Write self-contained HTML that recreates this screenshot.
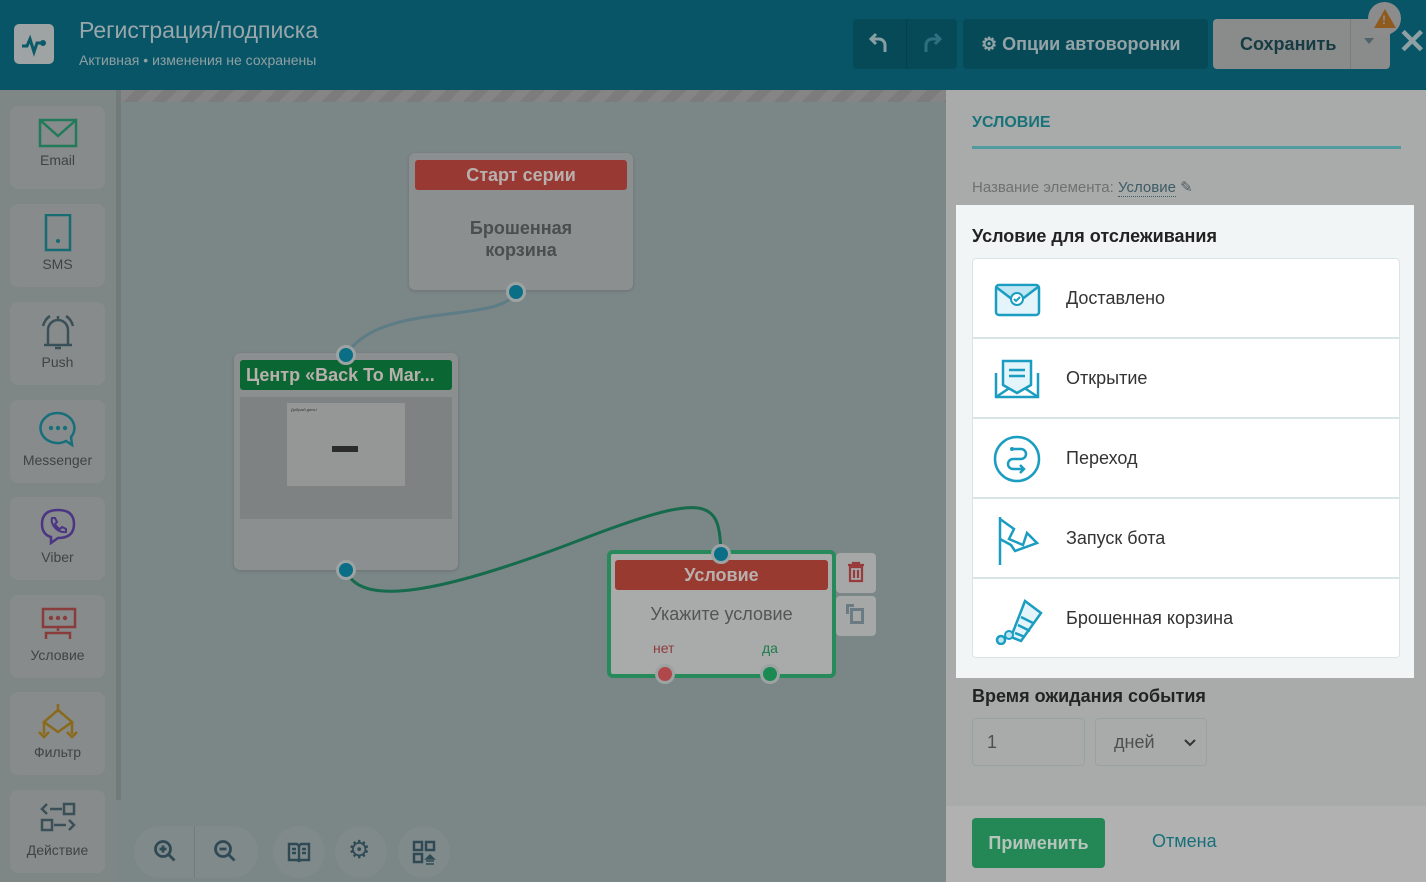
<!DOCTYPE html>
<html><head><meta charset="utf-8"><style>
*{box-sizing:border-box;margin:0;padding:0}
body{width:1426px;height:882px;overflow:hidden;position:relative;font-family:"Liberation Sans","Noto Sans CJK SC",sans-serif;background:#7b8687}
.a{position:absolute}
.hdr{left:0;top:0;width:1426px;height:90px;background:#085567}
.sb{left:0;top:90px;width:116px;height:792px;background:#7f8686}
.sbd{left:116px;top:90px;width:5px;height:710px;background:#737a7a}
.btn{position:absolute;left:10px;width:95px;height:83px;background:#878b8b;border-radius:8px;text-align:center;font-size:14px;color:#3e4444}
.btn svg{display:block;margin:10px auto 4px}
.stripe{left:121px;top:90px;width:825px;height:12px;background:repeating-linear-gradient(135deg,#858585 0 10px,#7c7c7c 10px 20px)}
.node{background:#8c8f8f;border-radius:6px;box-shadow:0 1px 3px rgba(0,0,0,.15)}
.nh{position:absolute;left:6px;right:6px;height:30px;border-radius:3px;color:#b9b0ae;font-weight:bold;font-size:18px;text-align:center;line-height:30px}
.dot{position:absolute;width:20px;height:20px;border-radius:50%;border:3px solid #9da3a3}
.rp{left:946px;top:90px;width:480px;height:716px;background:#a9abaa}
.ft{left:946px;top:806px;width:480px;height:76px;background:#b1b1b1}
.hl{left:956px;top:205px;width:458px;height:473px;background:#f1f5f5}
.card{position:absolute;left:16px;width:428px;height:80px;background:#fff;border:1px solid #d9e5e5;font-size:18px;color:#333;line-height:78px;padding-left:93px}
.card svg{position:absolute;left:20px;top:16px}
.rb{position:absolute;width:52px;height:52px;border-radius:26px;background:#818a8b;top:826px}
.rb svg{position:absolute;left:14px;top:14px}
</style></head><body>
<div class="a hdr">
 <div class="a" style="left:14px;top:24px;width:40px;height:40px;background:#9ea3a3;border-radius:5px"><svg width="40" height="40"><path d="M8 22h5l3-7 4 13 3-9h5" stroke="#0b5a69" stroke-width="3" fill="none"/><circle cx="29" cy="19" r="3" fill="#0b5a69"/></svg></div>
 <div class="a" style="left:79px;top:17px;font-size:23px;color:#9aa7aa">Регистрация/подписка</div>
 <div class="a" style="left:79px;top:52px;font-size:14px;color:#90a0a3">Активная • изменения не сохранены</div>
 <div class="a" style="left:853px;top:19px;width:104px;height:50px;background:#064a58;border-radius:4px"></div>
 <div class="a" style="left:906px;top:19px;width:1px;height:50px;background:#05404c"></div>
 <svg class="a" style="left:868px;top:31px" width="22" height="24"><path d="M8 3L3 8l5 5M3 8h8a6 6 0 0 1 6 6v7" fill="none" stroke="#8a9fa3" stroke-width="3"/></svg>
 <svg class="a" style="left:921px;top:31px" width="22" height="24"><path d="M14 3l5 5-5 5M19 8h-8a6 6 0 0 0-6 6v7" fill="none" stroke="#2f7080" stroke-width="3"/></svg>
 <div class="a" style="left:963px;top:19px;width:245px;height:50px;background:#064a58;border-radius:4px;color:#93a3a6;font-weight:bold;font-size:18px;line-height:50px;padding-left:18px">⚙ Опции автоворонки</div>
 <div class="a" style="left:1213px;top:19px;width:177px;height:50px;background:#8a8b8b;border-radius:4px;color:#163b43;font-weight:bold;font-size:18px;line-height:50px;padding-left:27px">Сохранить</div>
 <div class="a" style="left:1350px;top:19px;width:1px;height:50px;background:#7c7e7e"></div>
 <div class="a" style="left:1364px;top:38px;border:5px solid transparent;border-top:6px solid #4f6468"></div>
 <div class="a" style="left:1368px;top:2px;width:33px;height:33px;border-radius:50%;background:#8c8c8c"></div>
 <div class="a" style="left:1374px;top:9px;border-left:11px solid transparent;border-right:11px solid transparent;border-bottom:19px solid #8e5a1e"></div>
 <div class="a" style="left:1382px;top:13px;font-size:12px;font-weight:bold;color:#8c8c8c">!</div>
 <div class="a" style="left:1398px;top:22px;font-size:34px;color:#8fa0a3;font-weight:bold">✕</div>
</div>
<div class="a sb"></div><div class="a sbd"></div><div class="a stripe"></div>
<div class="btn" style="top:106px"><svg width="40" height="32"><rect x="2" y="4" width="36" height="26" fill="none" stroke="#217a59" stroke-width="2.5"/><path d="M2 4l18 16 18-16" fill="none" stroke="#217a59" stroke-width="2.5"/></svg>Email</div>
<div class="btn" style="top:204px"><svg width="40" height="38"><rect x="8" y="1" width="24" height="35" fill="none" stroke="#176b73" stroke-width="2.5"/><circle cx="20" cy="27" r="2" fill="#176b73"/></svg>SMS</div>
<div class="btn" style="top:302px"><svg width="40" height="38"><path d="M10 33V18a10 10 0 0 1 20 0v15zM6 33h28M17 36h6M20 4v3M5 14q2-7 7-10M35 14q-2-7-7-10" fill="none" stroke="#3a5058" stroke-width="2.5"/></svg>Push</div>
<div class="btn" style="top:400px"><svg width="40" height="38"><path d="M20 3a17 15 0 1 0 8 28l6 4-1-8A17 15 0 0 0 20 3z" fill="none" stroke="#166f7a" stroke-width="2.5"/><circle cx="13" cy="18" r="2.2" fill="#166f7a"/><circle cx="20" cy="18" r="2.2" fill="#166f7a"/><circle cx="27" cy="18" r="2.2" fill="#166f7a"/></svg>Messenger</div>
<div class="btn" style="top:497px"><svg width="40" height="38"><path d="M20 3c10 0 16 4 16 14s-6 14-16 14l-7 5v-6C6 28 4 23 4 17 4 7 10 3 20 3z" fill="none" stroke="#4c3584" stroke-width="2.5"/><path d="M14 11l3 0 2 4-2 2q2 4 5 5l2-2 4 2v3q-8 1-13-7-2-4-1-7z" fill="none" stroke="#4c3584" stroke-width="2"/></svg>Viber</div>
<div class="btn" style="top:595px"><svg width="40" height="38"><rect x="5" y="4" width="32" height="18" fill="none" stroke="#8a3c3c" stroke-width="2.5"/><circle cx="13" cy="13" r="2.2" fill="#8a3c3c"/><circle cx="20" cy="13" r="2.2" fill="#8a3c3c"/><circle cx="27" cy="13" r="2.2" fill="#8a3c3c"/><path d="M20 22v4M8 34v-6h24v6" fill="none" stroke="#8a3c3c" stroke-width="2.5"/></svg>Условие</div>
<div class="btn" style="top:692px"><svg width="50" height="38"><path d="M25 2v6L11 20l14 10 14-10L25 8M11 20v12M39 20v12M6 30l5 5 5-5M34 30l5 5 5-5" fill="none" stroke="#8a6a1a" stroke-width="2.5"/></svg>Фильтр</div>
<div class="btn" style="top:790px"><svg width="40" height="38"><path d="M9 4l-5 5 5 5M12 9h12M16 25h12M31 20l5 5-5 5" fill="none" stroke="#3a5058" stroke-width="2.5"/><rect x="4" y="20" width="10" height="10" fill="none" stroke="#3a5058" stroke-width="2.5"/><rect x="26" y="4" width="10" height="10" fill="none" stroke="#3a5058" stroke-width="2.5"/></svg>Действие</div>

<svg class="a" style="left:120px;top:100px" width="826" height="782"><path d="M396 192C380 225 260 200 226 255" fill="none" stroke="#5d7c85" stroke-width="3"/><path d="M226 470C240 510 330 490 460 440S600 400 601 455" fill="none" stroke="#156b4c" stroke-width="3"/></svg>

<div class="a node" style="left:409px;top:153px;width:224px;height:137px">
 <div class="nh" style="top:7px;background:#983a33">Старт серии</div>
 <div class="a" style="top:64px;width:100%;text-align:center;font-size:18px;font-weight:bold;color:#4a4e4e;line-height:22px">Брошенная<br>корзина</div>
 <div class="dot" style="left:97px;top:129px;background:#0a6e86"></div>
</div>
<div class="a node" style="left:234px;top:353px;width:224px;height:217px">
 <div class="nh" style="top:7px;background:#0a6633;text-align:left;padding-left:6px">Центр «Back To Mar...</div>
 <div class="a" style="left:6px;top:44px;width:212px;height:122px;background:#7f8282"></div>
 <div class="a" style="left:53px;top:50px;width:118px;height:83px;background:#959797;font-size:4px;color:#333;padding:4px">Добрый день!</div>
 <div class="a" style="left:98px;top:93px;width:26px;height:6px;background:#2b2b2b"></div>
 <div class="dot" style="left:102px;top:-8px;background:#0a6e86"></div>
 <div class="dot" style="left:102px;top:207px;background:#0a6e86"></div>
</div>
<div class="a" style="left:607px;top:550px;width:229px;height:128px;background:#a9abab;border:4px solid #268a5a;border-radius:6px">
 <div class="nh" style="top:6px;left:4px;right:4px;background:#983a2f">Условие</div>
 <div class="a" style="top:50px;width:100%;text-align:center;font-size:18px;color:#545555">Укажите условие</div>
 <div class="a" style="left:42px;top:86px;font-size:14px;color:#8d3c3c">нет</div>
 <div class="a" style="left:151px;top:86px;font-size:14px;color:#1d7a4a">да</div>
 <div class="dot" style="left:100px;top:-10px;background:#0a6e86"></div>
 <div class="dot" style="left:44px;top:110px;background:#b0474a"></div>
 <div class="dot" style="left:149px;top:110px;background:#1a8a52"></div>
</div>
<div class="a" style="left:836px;top:553px;width:40px;height:40px;background:#a6a8a8;border-radius:4px"><svg width="40" height="40"><path d="M12 12h16M17 12v-2h6v2M14 14h12v14H14zM18 17v8M22 17v8" fill="none" stroke="#9a3b3b" stroke-width="2.2"/></svg></div>
<div class="a" style="left:836px;top:596px;width:40px;height:40px;background:#a6a8a8;border-radius:4px"><div class="a" style="left:14px;top:12px;width:14px;height:16px;border:3px solid #6a7b84"></div><div class="a" style="left:10px;top:8px;width:8px;height:10px;border-left:3px solid #6a7b84;border-top:3px solid #6a7b84"></div></div>

<div class="rb" style="left:134px;width:124px;background:#818a8b"></div>
<div class="a" style="left:194px;top:826px;width:1px;height:52px;background:#737b7c"></div>
<svg class="a" style="left:152px;top:838px" width="26" height="26"><circle cx="11" cy="11" r="7.5" fill="none" stroke="#2f4a55" stroke-width="2.8"/><path d="M16.5 16.5l6 6M7.5 11h7M11 7.5v7" stroke="#2f4a55" stroke-width="2.8"/></svg>
<svg class="a" style="left:212px;top:838px" width="26" height="26"><circle cx="11" cy="11" r="7.5" fill="none" stroke="#2f4a55" stroke-width="2.8"/><path d="M16.5 16.5l6 6M7.5 11h7" stroke="#2f4a55" stroke-width="2.8"/></svg>
<div class="rb" style="left:273px"><svg width="24" height="24"><path d="M2 4h8l2 2 2-2h8v16h-8l-2 1-2-1H2zM12 6v15M5 9h4M5 13h4M15 9h4M15 13h4" fill="none" stroke="#2f4a55" stroke-width="2.4"/></svg></div>
<div class="rb" style="left:335px"></div><div class="a" style="left:348px;top:835px;font-size:25px;color:#2f4a55">⚙</div>
<div class="rb" style="left:398px"><svg width="26" height="26"><rect x="2" y="2" width="8" height="8" fill="none" stroke="#2f4a55" stroke-width="2.5"/><rect x="14" y="2" width="8" height="8" fill="none" stroke="#2f4a55" stroke-width="2.5"/><rect x="2" y="14" width="8" height="8" fill="none" stroke="#2f4a55" stroke-width="2.5"/><path d="M14 19l4-4 4 4zM14 21h8M14 24h8" fill="#2f4a55" stroke="#2f4a55" stroke-width="1.5"/></svg></div>

<div class="a rp"></div><div class="a ft"></div>
<div class="a" style="left:972px;top:114px;font-size:16px;font-weight:bold;color:#17727a">УСЛОВИЕ</div>
<div class="a" style="left:972px;top:146px;width:429px;height:3px;background:#4f9b9f"></div>
<div class="a" style="left:972px;top:178px;font-size:15px;color:#6e7171">Название элемента: <span style="color:#3e5c66;border-bottom:1px dotted #3e5c66">Условие</span> <span style="color:#4d5e63">✎</span></div>
<div class="a hl">
 <div class="a" style="left:16px;top:21px;font-size:18px;font-weight:bold;color:#222">Условие для отслеживания</div>
 <div class="card" style="top:53px;border-radius:4px 4px 0 0"><svg width="48" height="48"><rect x="3" y="10" width="43" height="30" rx="3" fill="#e3f4fb" stroke="#1a9dc0" stroke-width="2.5"/><path d="M3 12l21 16 21-16" fill="#bfe6f4" stroke="#1a9dc0" stroke-width="2.5"/><circle cx="24" cy="24" r="6" fill="#fff" stroke="#1a9dc0" stroke-width="2"/><path d="M21 24l2 2 4-4" fill="none" stroke="#1a9dc0" stroke-width="2"/></svg>Доставлено</div>
 <div class="card" style="top:133px"><svg width="48" height="48"><path d="M3 18v24h42V18" fill="none" stroke="#1a9dc0" stroke-width="2.5"/><path d="M3 42l21-14 21 14" fill="none" stroke="#1a9dc0" stroke-width="2.5"/><path d="M10 30V6h28v24l-14 8z" fill="#e3f4fb" stroke="#1a9dc0" stroke-width="2.5"/><path d="M16 15h16M16 21h16" stroke="#1a9dc0" stroke-width="2.5"/></svg>Открытие</div>
 <div class="card" style="top:213px"><svg width="48" height="48"><circle cx="24" cy="24" r="22" fill="none" stroke="#1a9dc0" stroke-width="2.5"/><path d="M20 14h8a5 5 0 0 1 0 10h-8a5 5 0 0 0 0 10h10M27 30l4 4-4 4" fill="none" stroke="#1a9dc0" stroke-width="2.5"/><circle cx="19" cy="14" r="2" fill="#1a9dc0"/></svg>Переход</div>
 <div class="card" style="top:293px"><svg width="50" height="50"><path d="M7 2v48M7 4l14 10-5 10 14 6 4-12 10 10-22 8-4-6L7 24" fill="none" stroke="#1a9dc0" stroke-width="2.5"/></svg>Запуск бота</div>
 <div class="card" style="top:373px;border-radius:0 0 4px 4px"><svg width="52" height="50"><path d="M18 42L32 6l16 12-20 28z" fill="#e3f4fb" stroke="#1a9dc0" stroke-width="2.5"/><path d="M28 22l12 6M25 30l12 6M22 38l10 4" stroke="#1a9dc0" stroke-width="2.5"/><circle cx="8" cy="45" r="4" fill="#bfe6f4" stroke="#1a9dc0" stroke-width="2.5"/><circle cx="16" cy="40" r="4" fill="#bfe6f4" stroke="#1a9dc0" stroke-width="2"/></svg>Брошенная корзина</div>
</div>
<div class="a" style="left:972px;top:686px;font-size:18px;font-weight:bold;color:#232323">Время ожидания события</div>
<div class="a" style="left:972px;top:718px;width:113px;height:48px;border:1px solid #97a3a3;border-radius:4px;background:#a9abaa;font-size:18px;color:#4e5050;line-height:46px;padding-left:14px">1</div>
<div class="a" style="left:1095px;top:718px;width:112px;height:48px;border:1px solid #97a3a3;border-radius:4px;background:#a9abaa;font-size:18px;color:#4e5050;line-height:46px;padding-left:18px">дней<svg class="a" style="right:10px;top:20px" width="12" height="8"><path d="M1 1l5 5 5-5" fill="none" stroke="#333" stroke-width="2"/></svg></div>
<div class="a" style="left:972px;top:818px;width:133px;height:50px;background:#238856;border-radius:4px;color:#b6c5bc;font-weight:bold;font-size:18px;text-align:center;line-height:50px">Применить</div>
<div class="a" style="left:1152px;top:831px;font-size:18px;color:#17707a">Отмена</div>
</body></html>
